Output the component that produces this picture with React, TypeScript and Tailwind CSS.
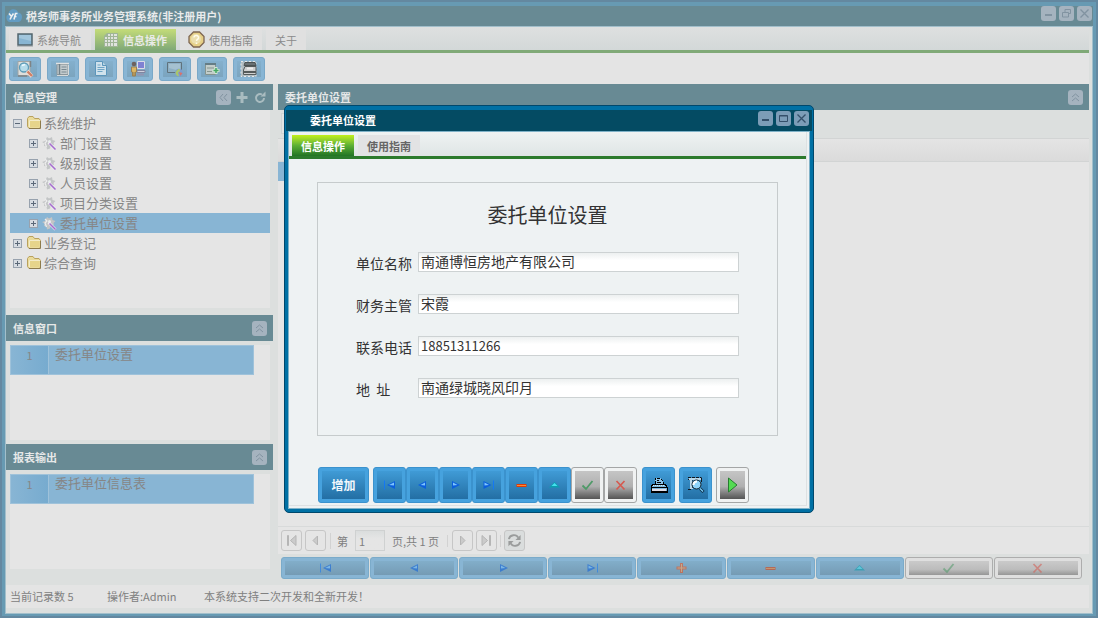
import React from "react";

type IconProps = { dim?: boolean };

/* ---------- navigation glyphs ---------- */

type GlyphName = "first" | "prev" | "next" | "last" | "add" | "delete" | "edit" | "ok" | "cancel";

const Glyph = ({ name, dim }: { name: GlyphName } & IconProps) => (
  <svg width="13" height="12" viewBox="0 0 13 12" className={dim ? "opacity-55" : ""} aria-hidden="true">
    {name === "first" && (
      <>
        <path d="M1.500 1.500v9" stroke="#1478f4" strokeWidth="1" />
        <path d="M12 2v8L4 6z" fill="#0b5fdc" />
        <path d="M11 3.500v3L6 6z" fill="#7cc4ff" />
      </>
    )}
    {name === "prev" && (
      <>
        <path d="M10 2v8L2 6z" fill="#0b5fdc" />
        <path d="M9 3.500v3L4.500 6z" fill="#7cc4ff" />
      </>
    )}
    {name === "next" && (
      <>
        <path d="M3 2v8l8-4z" fill="#0b5fdc" />
        <path d="M4 3.500v3L8.500 6z" fill="#7cc4ff" />
      </>
    )}
    {name === "last" && (
      <>
        <path d="M1.500 2v8l8-4z" fill="#0b5fdc" />
        <path d="M2.500 3.500v3L7 6z" fill="#7cc4ff" />
        <path d="M11.500 1.500v9" stroke="#1478f4" strokeWidth="1" />
      </>
    )}
    {name === "add" && (
      <>
        <path d="M6.500 1v10M1.500 6h10" stroke="#f0501a" strokeWidth="3" />
        <path d="M6.500 2v8M2.500 6h8" stroke="#ffae60" strokeWidth="1" />
      </>
    )}
    {name === "delete" && (
      <>
        <path d="M1.500 6.500h10" stroke="#e03a06" strokeWidth="3" />
        <path d="M2 6.500h9" stroke="#ff8c2e" strokeWidth="1" />
      </>
    )}
    {name === "edit" && (
      <>
        <path d="M6.500 3l5.500 5.500H1z" fill="#0a9fb0" />
        <path d="M6.500 4l3 3h-6z" fill="#46e0ee" />
      </>
    )}
    {name === "ok" && <path d="M1.500 6.500l3.500 3.500L11.500 2" fill="none" stroke="#4f9a68" strokeWidth="1.800" />}
    {name === "cancel" && <path d="M2.500 2l8 8.500M10.500 2l-8 8.500" fill="none" stroke="#d55a50" strokeWidth="1.700" />}
  </svg>
);

const glyphLabels: Record<GlyphName, string> = {
  first: "首记录",
  prev: "上一条",
  next: "下一条",
  last: "末记录",
  add: "新增",
  delete: "删除",
  edit: "编辑",
  ok: "保存",
  cancel: "取消",
};

/* ---------- toolbar icons ---------- */

const SearchPage = () => (
  <svg width="18" height="18" viewBox="0 0 18 18" aria-hidden="true">
    <path d="M2 1.500h12v14H2z" fill="#dededb" stroke="#a0a5a5" />
    <path d="M14.500 1v6M2 16h9" stroke="#7f8486" strokeWidth="1.500" />
    <circle cx="8" cy="7.500" r="4.500" fill="#b6dcea" stroke="#5d9cb8" strokeWidth="1.300" />
    <path d="M6 5.500l3-1" stroke="#eefaff" strokeWidth="1.500" />
    <path d="M11 11l5 5.500" stroke="#f0dcd2" strokeWidth="3.600" />
    <path d="M11.500 11.500l4.500 4.500" stroke="#cf7f66" strokeWidth="2.400" />
  </svg>
);
const ListIcon = () => (
  <svg width="16" height="16" viewBox="0 0 16 16" aria-hidden="true">
    <path d="M2 3.500h11v10H2z" fill="#c3cbce" stroke="#8b969b" />
    <path d="M1 2.500h13" stroke="#e0e2e2" strokeWidth="1.500" />
    <path d="M4.500 3v10.500" stroke="#6f8089" strokeWidth="1.500" />
    <path d="M6.500 6h5M6.500 8.500h5M6.500 11h5" stroke="#788991" />
    <path d="M13.500 4v10M2 14.500h11" stroke="#d7dada" />
  </svg>
);
const DocIcon = () => (
  <svg width="18" height="18" viewBox="0 0 18 18" aria-hidden="true">
    <path d="M3.500 1.500h7l4 4v10h-11z" fill="#d0e2ec" stroke="#5c96bb" />
    <path d="M10.500 1.500v4h4" fill="#b5d3e2" stroke="#5c96bb" />
    <path d="M5.500 5h3M5.500 7.500h7M5.500 9.500h7M5.500 11.500h5" stroke="#6fa5c5" />
  </svg>
);
const UserIcon = () => (
  <svg width="18" height="18" viewBox="0 0 18 18" aria-hidden="true">
    <path d="M8.500 1.500h7v7h-7z" fill="#7f82d2" stroke="#dadce6" />
    <path d="M8 10.500h8v2H8z" fill="#cfd0dc" stroke="#8085a0" />
    <path d="M8 14.500h7" stroke="#9295b2" strokeWidth="2" />
    <circle cx="5" cy="4" r="2.300" fill="#6d625f" />
    <path d="M2.500 7h5v5h-1v4h-3v-4h-1z" fill="#dcb663" stroke="#9a8153" />
    <path d="M5 12v4" stroke="#8c7651" />
  </svg>
);
const ScreenIcon = () => (
  <svg width="18" height="18" viewBox="0 0 18 18" aria-hidden="true">
    <path d="M1.500 2.500h14v10h-14z" fill="#8fb0c4" stroke="#5f727c" />
    <path d="M3 4h11v7L3 8z" fill="#a5c1d0" />
    <circle cx="13" cy="12.500" r="3.800" fill="#7b9ed0" />
    <path d="M13 8.700c2 1 1 3-1 4l1 3.500c-4-.5-5-5 0-7.500z" fill="#a9c66c" />
    <path d="M13 12l3.500 1-2 3z" fill="#d8736a" />
  </svg>
);
const AddGridIcon = () => (
  <svg width="18" height="18" viewBox="0 0 18 18" aria-hidden="true">
    <path d="M2.500 3.500h10v11h-10z" fill="#c3cdca" stroke="#84938e" />
    <path d="M2 4h11" stroke="#657d85" strokeWidth="2" />
    <path d="M4 8h7M4 11.500h5" stroke="#87968f" />
    <path d="M13 7v7M9.500 10.500h7" stroke="#cfe6d4" strokeWidth="3" />
    <path d="M13 8v5M10.500 10.500h5" stroke="#43a862" strokeWidth="1.500" />
  </svg>
);
const PrinterGrayIcon = () => (
  <svg width="20" height="18" viewBox="0 0 20 18" aria-hidden="true">
    <path d="M2 1.500h15v15H2z" fill="#b2bdc2" stroke="#e6e8e8" strokeDasharray="2 2" />
    <path d="M6 2.500h10l1 3H5z" fill="#697174" stroke="#4d5353" />
    <path d="M6 6.500h11v8H4.500V10z" fill="#cfd0d0" stroke="#555b5b" />
    <path d="M8 8.500h6" stroke="#ededed" strokeWidth="2" />
    <path d="M5 12h12" stroke="#555b5b" strokeWidth="2" />
  </svg>
);
const PrinterIcon = () => (
  <svg width="18" height="18" viewBox="0 0 18 18" shapeRendering="crispEdges" aria-hidden="true">
    <path d="M5 8V2h5l3 3v4" fill="#8cc4e8" stroke="#000" strokeDasharray="3 1" />
    <path d="M7 4h2M7 6h4" stroke="#000" />
    <path d="M3 8h12l2 3v5H1v-5z" fill="#7db9dd" stroke="#000" />
    <path d="M3 9.500h12" stroke="#d3ecfa" strokeDasharray="1 1" />
    <path d="M1 11.500h16" stroke="#000" />
    <path d="M2 13.500h14" stroke="#e4dfe8" strokeWidth="2" />
    <path d="M1 15.500h16" stroke="#000" />
  </svg>
);
const PreviewIcon = () => (
  <svg width="18" height="18" viewBox="0 0 18 18" aria-hidden="true">
    <path d="M1 1.500h13.500M1 3.500h4M1 13.500h3" stroke="#101820" strokeDasharray="3 1" />
    <path d="M2 2h12v2H6v9H3V4H2z" fill="#b9d7e9" />
    <path d="M5.500 4v8" stroke="#29506c" />
    <path d="M14.500 2v4" stroke="#101820" />
    <circle cx="9.500" cy="8.500" r="4.500" fill="#8fd4fa" stroke="#142028" />
    <path d="M6.500 9c0-2 1.500-3.500 3.500-3.500" fill="none" stroke="#fff" strokeWidth="2" />
    <path d="M13 12.500l3.500 3.500" stroke="#102f48" strokeWidth="3" />
    <path d="M13 12.500l3 3" stroke="#7cd3ff" strokeWidth="1.300" />
  </svg>
);
const MonitorIcon = () => (
  <svg width="16" height="14" viewBox="0 0 16 14" aria-hidden="true">
    <path d="M1 1h14v11H1z" fill="#88b5d2" stroke="#53656e" strokeWidth="1.500" />
    <path d="M2 2h12v6L2 5z" fill="#a2c6dc" />
    <path d="M0 13.500h16" stroke="#b9bdbf" />
  </svg>
);
const GridIcon = () => (
  <svg width="16" height="16" viewBox="0 0 16 16" aria-hidden="true">
    <path d="M4 1h11v14H1V4z" fill="#9fb596" />
    <path
      d="M5 2h2v2H5zM8 2h2v2H8zM11 2h3v2h-3zM2 5h2v2H2zM5 5h2v2H5zM8 5h2v2H8zM11 5h3v2h-3zM2 8h2v2H2zM5 8h2v2H5zM8 8h2v2H8zM11 8h3v2h-3zM2 11h2v3H2zM5 11h2v3H5zM8 11h2v3H8zM11 11h3v3h-3z"
      fill="#e0e3de"
    />
  </svg>
);
const HelpIcon = () => (
  <svg width="17" height="17" viewBox="0 0 17 17" aria-hidden="true">
    <path d="M5.500 1h6L16 5.500v6L11.500 16h-6L1 11.500v-6z" fill="#e6cf87" stroke="#7e6651" strokeWidth="1.300" />
    <circle cx="8" cy="8" r="5" fill="#ecdfae" />
    <path d="M6 6.500c0-3 5-2.500 4.500.5-.3 1.500-2 1.500-2 3M8.500 11.500v1.500" fill="none" stroke="#fffbe9" strokeWidth="1.500" />
  </svg>
);
const LogoIcon = () => (
  <svg width="16" height="14" viewBox="0 0 16 14" aria-hidden="true">
    <path d="M3.500 13C-.5 12 -.5 6 2.500 5.500 2.500-1 11-1 12 3.500c5.500 0 5 9 .5 9.500z" fill="#629cc3" />
    <path d="M3 4.500l2.500 3L7.500 4.500M5.500 7.500L4 10.500M11.500 4.500H9.500l-1.500 6M8.500 7.500h2" fill="none" stroke="#edf0f2" strokeWidth="1.600" />
  </svg>
);
const FolderIcon = () => (
  <svg width="16" height="14" viewBox="0 0 16 14" aria-hidden="true">
    <path d="M1.500 10.500v-8l1.500-2h4l1.500 2H13l1.500 2v7l-1.500 1H3z" fill="#eadb9a" stroke="#b9a15e" />
    <path d="M4 4h9.500v7H4z" fill="#e6d48a" />
    <path d="M3.500 11V4.500H14" fill="none" stroke="#f3ebc8" />
    <path d="M3 12.500h11.500V5" fill="none" stroke="#8d7b4c" />
  </svg>
);
const GearIcon = () => (
  <svg width="15" height="15" viewBox="0 0 15 15" aria-hidden="true">
    <path d="M5 1l2 1.500L10 1l.5 3 3 1-2 2 .5 2-3-.5-1 4-3 1-.5-3L2 10l.5-2.500L0 6l3-1z" fill="#c3c5c6" />
    <path d="M3 3l2 2-2 2 1.500 4" fill="none" stroke="#ececec" strokeWidth="1.200" />
    <circle cx="7.500" cy="5.500" r="1.500" fill="#e9edef" />
    <path d="M6.500 6.500l7 7" stroke="#ededf0" strokeWidth="2.600" />
    <path d="M7.500 7.500l6 6" stroke="#a66dcd" strokeWidth="1.600" />
  </svg>
);
const ToggleIcon = ({ open }: { open?: boolean }) => (
  <svg width="9" height="9" viewBox="0 0 9 9" shapeRendering="crispEdges" aria-hidden="true">
    <path d="M.5.5h8v8h-8z" fill="#d7dce2" stroke="#98a2ae" />
    <path d="M2 4.500h5" stroke="#5b6878" />
    {!open && <path d="M4.500 2v5" stroke="#5b6878" />}
  </svg>
);

/* ---------- small window tools ---------- */

type ToolKind = "min" | "restore" | "max" | "close" | "up" | "left";

const toolLabels: Record<ToolKind, string> = {
  min: "最小化",
  restore: "还原",
  max: "最大化",
  close: "关闭",
  up: "折叠",
  left: "收起",
};

const Tool = ({ kind, active }: { kind: ToolKind; active?: boolean }) => (
  <button
    type="button"
    aria-label={toolLabels[kind]}
    className={
      active
        ? "flex h-[15px] w-[15px] items-center justify-center rounded-[3px] bg-[#7c9db7] text-[#34506a]"
        : "flex h-[15px] w-[15px] items-center justify-center rounded-[3px] bg-[#a5b3bf] text-[#8193a1]"
    }
  >
    <svg width="9" height="9" viewBox="0 0 9 9" fill="none" stroke="currentColor" aria-hidden="true">
      {kind === "min" && <path d="M1 6h7" strokeWidth="2" />}
      {kind === "restore" && <path d="M3 3V.5h5.500v4H6.500M.5 3.500h6v4.500h-6z" />}
      {kind === "max" && <path d="M.5 7.500v-6h8v6zM.5 2h8" />}
      {kind === "close" && <path d="M.5.5l8 8M8.500.5l-8 8" strokeWidth="1.300" />}
      {kind === "up" && <path d="M1 4l3.500-3L8 4M1 8l3.500-3L8 8" />}
      {kind === "left" && <path d="M4 1L1 4.500 4 8M8 1L5 4.500 8 8" />}
    </svg>
  </button>
);

const PanelHeader = ({ title, children }: { title: string; children?: React.ReactNode }) => (
  <header className="flex h-[26px] shrink-0 items-center justify-between bg-[#688a94] pr-[6px] pl-[7px]">
    <h2 className="text-[11px] leading-4 font-bold text-[#e6e8e8]">{title}</h2>
    <div className="flex items-center gap-1">{children ?? <Tool kind="up" />}</div>
  </header>
);

const TreeRow = ({ label, level, open, selected }: { label: string; level: 0 | 1; open?: boolean; selected?: boolean }) => (
  <li className={`flex h-5 items-center ${level === 0 ? "pl-[3px]" : "pl-[19px]"} ${selected ? "bg-[#88b5d4]" : ""}`}>
    <button type="button" aria-label={open ? "折叠" : "展开"} className="w-[13px] shrink-0">
      <ToggleIcon open={open} />
    </button>
    <span className="w-[18px] shrink-0">{level === 0 ? <FolderIcon /> : <GearIcon />}</span>
    <span className="text-[13px] leading-4 text-[#868686]">{label}</span>
  </li>
);

const ListPanel = ({ title, item }: { title: string; item: string }) => (
  <section className="shrink-0">
    <PanelHeader title={title} />
    <div className="pt-1 pr-[3px] pb-1 pl-1">
      <ol className="h-[95px] bg-[#e5e5e5] pr-4">
        <li className="flex h-[30px] border border-[#9fc2da] bg-[#88b5d4] text-[#868686]">
          <span className="w-[38px] border-r border-[#9fc2da] bg-linear-to-r from-[#88b5d4] to-[#77abcf] pt-px text-center text-[11px] leading-4">
            1
          </span>
          <span className="pl-[6px] text-[13px] leading-4">{item}</span>
        </li>
      </ol>
    </div>
  </section>
);

const ToolbarButton = ({ label, narrow, children }: { label: string; narrow?: boolean; children: React.ReactNode }) => (
  <button
    type="button"
    aria-label={label}
    className={`${narrow ? "w-[30px]" : "w-8"} flex h-6 items-center justify-center rounded-[3px] border border-[#79a8c8] bg-[#88b5d4] p-[3px]`}
  >
    <span className="flex h-full w-full items-center justify-center bg-linear-to-b from-[#84b0cd] to-[#7ba4be]">{children}</span>
  </button>
);

const PagerButton = ({ label, d }: { label: string; d: string }) => (
  <button
    type="button"
    aria-label={label}
    className="flex h-[21px] w-[21px] items-center justify-center rounded-[3px] border border-[#c6c6c6] bg-[#e5e5e5]"
  >
    <svg width="13" height="13" viewBox="0 0 13 13" fill="#cbcbcb" stroke="#b5b5b5" aria-hidden="true">
      <path d={d} />
    </svg>
  </button>
);

const WideButton = ({ name }: { name: GlyphName }) => {
  const gray = name === "ok" || name === "cancel";
  return (
    <button
      type="button"
      aria-label={glyphLabels[name]}
      className={`h-[22px] min-w-0 flex-1 rounded-[3px] border p-[3px] ${gray ? "border-[#adadad] bg-[#dfdfdf]" : "border-[#7babca] bg-[#88b5d4]"}`}
    >
      <span
        className={`flex h-full items-center justify-center ${gray ? "bg-linear-to-b from-[#cacaca] from-0% via-[#bcbcbc] via-60% to-[#969696]" : "bg-linear-to-b from-[#82aeca] to-[#759bb4]"}`}
      >
        <Glyph name={name} dim />
      </span>
    </button>
  );
};

const DialogButton = ({ label, tone, wide, children }: { label: string; tone: "blue" | "gray"; wide?: boolean; children: React.ReactNode }) => (
  <button
    type="button"
    aria-label={label}
    className={`h-9 ${wide ? "w-[51px]" : "w-[33px]"} rounded-[3px] border p-[3px] ${tone === "gray" ? "border-[#a4a6a6] bg-[#f0f2f2]" : "border-[#3b92cd] bg-[#46a2de]"}`}
  >
    <span
      className={`flex h-full items-center justify-center ${tone === "gray" ? "bg-linear-to-b from-[#c5c5c5] from-0% via-[#b0b0b0] via-55% to-[#555555]" : "bg-linear-to-b from-[#409bd6] to-[#236fa4]"}`}
    >
      {children}
    </span>
  </button>
);

const Field = ({ id, label, value, small }: { id: string; label: string; value: string; small?: boolean }) => (
  <div className="flex h-5 items-center">
    <label htmlFor={id} className="w-[62px] shrink-0 pt-[2px] text-[14px] leading-5 whitespace-pre">
      {label}
    </label>
    <input
      id={id}
      defaultValue={value}
      className={`h-5 w-full min-w-0 border border-[#cdd2d3] bg-linear-to-b from-[#edf0f0] from-0% to-white to-40% px-[2px] pb-[2px] leading-4 outline-none ${small ? "text-[13px]" : "text-[14px]"}`}
    />
  </div>
);

const navGlyphs: GlyphName[] = ["first", "prev", "next", "last", "delete", "edit", "ok", "cancel"];
const wideGlyphs: GlyphName[] = ["first", "prev", "next", "last", "add", "delete", "edit", "ok", "cancel"];

const Dialog = () => (
  <div
    role="dialog"
    aria-labelledby="dialog-title"
    className="flex h-[408px] w-[530px] flex-col rounded-[5px] border border-[#00486c] bg-[#0070a4] px-[3px] pt-1 pb-[3px]"
  >
    <header className="-mx-[2px] flex h-[21px] shrink-0 items-center justify-between bg-[#044b63] pr-[3px] pl-6">
      <h2 id="dialog-title" className="pb-[2px] text-[11px] leading-4 font-bold text-white">
        委托单位设置
      </h2>
      <div className="flex gap-[3px] pb-1">
        <Tool kind="min" active />
        <Tool kind="max" active />
        <Tool kind="close" active />
      </div>
    </header>
    <div className="min-h-0 flex-1 border border-[#7fb2c8] bg-[#eef2f3] pr-[2px] pb-[2px]">
      <div className="flex h-full flex-col border-r border-b border-[#dde1e2]">
        <nav className="flex h-[27px] shrink-0 items-end gap-1 border-b-[3px] border-[#2c7a2c] bg-linear-to-b from-[#eff3f3] to-[#dfe5e5] pl-[3px]">
          <button type="button" className="h-[21px] w-[62px] bg-linear-to-b from-[#c2f018] via-[#5cb034] to-[#217424] text-[11px] leading-5 font-bold text-white">
            信息操作
          </button>
          <button type="button" className="h-[21px] w-[62px] bg-[#e2e3e4] text-[11px] leading-5 font-bold text-[#666]">
            使用指南
          </button>
        </nav>
        <div className="flex min-h-0 flex-1 flex-col justify-between px-7 pt-[23px] pb-[2px]">
          <form className="h-[254px] border border-[#c6cbcc] px-[38px] text-[#333]" onSubmit={(e) => e.preventDefault()}>
            <h3 className="mt-[18px] mb-[23px] text-center text-[20px] leading-7">委托单位设置</h3>
            <div className="flex flex-col gap-[22px]">
              <Field id="unit" label="单位名称" value="南通博恒房地产有限公司" />
              <Field id="chief" label="财务主管" value="宋霞" />
              <Field id="phone" label="联系电话" value="18851311266" small />
              <Field id="address" label={"地  址"} value="南通绿城晓风印月" />
            </div>
          </form>
          <div className="flex gap-1 pl-px">
            <DialogButton label="增加" tone="blue" wide>
              <span className="text-[12px] leading-4 font-bold text-[#f2f8fc]">增加</span>
            </DialogButton>
            <div className="flex">
              {navGlyphs.map((name) => (
                <DialogButton key={name} label={glyphLabels[name]} tone={name === "ok" || name === "cancel" ? "gray" : "blue"}>
                  <Glyph name={name} />
                </DialogButton>
              ))}
            </div>
            <div className="flex gap-1 pl-px">
              <DialogButton label="打印" tone="blue">
                <PrinterIcon />
              </DialogButton>
              <DialogButton label="预览" tone="blue">
                <PreviewIcon />
              </DialogButton>
              <DialogButton label="运行" tone="gray">
                <svg width="12" height="16" viewBox="0 0 12 16" aria-hidden="true">
                  <path d="M1.500 1v14l8.500-7z" fill="#54da52" stroke="#267d30" />
                </svg>
              </DialogButton>
            </div>
          </div>
        </div>
      </div>
    </div>
  </div>
);

export default function App() {
  return (
    <div className="relative flex h-screen flex-col overflow-hidden border-2 border-[#6488a0] bg-[#679ab3] px-[3px] pt-1 pb-[2px] font-['Noto_Sans_CJK_SC',sans-serif]">
      <header className="flex h-5 shrink-0 items-center justify-between bg-[#688a94] px-px">
        <div className="flex items-center gap-1">
          <LogoIcon />
          <h1 className="pb-px text-[11px] leading-4 font-bold text-[#e8eaeb]">税务师事务所业务管理系统(非注册用户)</h1>
        </div>
        <div className="flex gap-[3px] pb-[5px]">
          <Tool kind="min" />
          <Tool kind="restore" />
          <Tool kind="close" />
        </div>
      </header>

      <div className="flex min-h-0 flex-1 flex-col border border-[#a2bfcb] bg-[#dcdfde] pr-[3px]">
        <nav className="flex h-[26px] shrink-0 items-end gap-1 border-b-[3px] border-[#80a977] bg-linear-to-b from-[#dee0e0] to-[#d3d8d8] pl-[3px] text-[11px] leading-5 text-[#8b8b8b]">
          <button type="button" className="flex h-[21px] w-[82px] items-center gap-1 bg-[#e0e0e0] pl-2">
            <MonitorIcon />
            <span>系统导航</span>
          </button>
          <button type="button" className="flex h-[21px] w-[81px] items-center gap-1 bg-linear-to-b from-[#c4dc78] to-[#80a977] pl-2 font-bold text-[#e8eae6]">
            <GridIcon />
            <span>信息操作</span>
          </button>
          <button type="button" className="flex h-[21px] w-[82px] items-center gap-1 bg-[#e0e0e0] pl-2">
            <HelpIcon />
            <span>使用指南</span>
          </button>
          <button type="button" className="h-[21px] w-10 bg-[#e0e0e0] text-center">
            关于
          </button>
        </nav>

        <div className="flex h-[31px] shrink-0 items-center gap-[6px] bg-[#e4e4e4] pl-[3px]">
          <ToolbarButton label="查询"><SearchPage /></ToolbarButton>
          <ToolbarButton label="列表"><ListIcon /></ToolbarButton>
          <ToolbarButton label="文档"><DocIcon /></ToolbarButton>
          <ToolbarButton label="用户" narrow><UserIcon /></ToolbarButton>
          <ToolbarButton label="屏幕"><ScreenIcon /></ToolbarButton>
          <ToolbarButton label="添加" narrow><AddGridIcon /></ToolbarButton>
          <ToolbarButton label="打印"><PrinterGrayIcon /></ToolbarButton>
        </div>

        <div className="flex min-h-0 flex-1 gap-[5px]">
          <aside className="flex w-[267px] shrink-0 flex-col pb-3">
            <PanelHeader title="信息管理">
              <Tool kind="left" />
              <button type="button" aria-label="添加">
                <svg width="14" height="14" viewBox="0 0 14 14" aria-hidden="true">
                  <path d="M7 2v11M1.500 7.500h11" stroke="#a9bcc0" strokeWidth="3" />
                </svg>
              </button>
              <button type="button" aria-label="刷新">
                <svg width="14" height="14" viewBox="0 0 14 14" aria-hidden="true">
                  <path d="M9 4.500A4 4 0 1 0 11 8" fill="none" stroke="#a9bcc0" strokeWidth="2" />
                  <path d="M7.500 6.500h5v-5z" fill="#a9bcc0" />
                </svg>
              </button>
            </PanelHeader>
            <div className="flex min-h-0 flex-1 flex-col pr-[3px] pb-[7px] pl-1">
              <ul className="min-h-0 flex-1 bg-[#e5e5e5] pt-[3px]">
                <TreeRow level={0} open label="系统维护" />
                <TreeRow level={1} label="部门设置" />
                <TreeRow level={1} label="级别设置" />
                <TreeRow level={1} label="人员设置" />
                <TreeRow level={1} label="项目分类设置" />
                <TreeRow level={1} label="委托单位设置" selected />
                <TreeRow level={0} label="业务登记" />
                <TreeRow level={0} label="综合查询" />
              </ul>
            </div>
            <ListPanel title="信息窗口" item="委托单位设置" />
            <ListPanel title="报表输出" item="委托单位信息表" />
          </aside>

          <main className="flex min-w-0 flex-1 flex-col">
            <PanelHeader title="委托单位设置" />
            <div className="h-7 shrink-0 p-[3px]">
              <div className="h-[21px] w-16 border border-[#d0d3d3] bg-[#e2e4e4]" />
            </div>
            <div className="h-6 shrink-0 border-y border-[#d2d4d4] bg-linear-to-b from-[#e4e4e4] to-[#dbdbdb]" />
            <div className="min-h-0 flex-1 bg-[#e5e5e5]">
              <div className="h-[19px] w-16 bg-[#88b5d4]" />
            </div>
            <div className="flex h-7 shrink-0 items-center gap-[3px] border-t border-[#d8dada] bg-[#e5e5e5] pl-[3px] text-[11px] leading-4 text-[#808080]">
              <PagerButton label="首页" d="M2.500 1.500h1v10h-1zM11 1.500v10L5.500 6.500z" />
              <PagerButton label="上一页" d="M8.500 2v9L4 6.500z" />
              <label htmlFor="page" className="ml-px border-l border-[#d2d2d2] pl-[6px]">第</label>
              <input id="page" defaultValue="1" className="ml-1 h-[21px] w-[30px] border border-[#cfd1d1] bg-linear-to-b from-[#dadddd] to-[#e5e5e5] to-40% px-[3px] outline-none" />
              <span className="mx-1 pr-px">页,共 1 页</span>
              <span className="mr-px h-3 border-l border-[#d2d2d2]" />
              <PagerButton label="下一页" d="M4.500 2v9L9 6.500z" />
              <PagerButton label="末页" d="M2 1.500v10L7.500 6.500zM9.500 1.500h1v10h-1z" />
              <span className="h-3 border-l border-[#d2d2d2]" />
              <button type="button" aria-label="刷新" className="flex h-[21px] w-[21px] items-center justify-center rounded-[3px] border border-[#c6c6c6] bg-[#dadddd]">
                <svg width="15" height="15" viewBox="0 0 16 16" fill="none" stroke="#9a9c9c" strokeWidth="2" aria-hidden="true">
                  <path d="M2 6.500C3 1.500 10 1 12 5M14 9.500c-1 5-8 5.500-10 1.500" />
                  <path d="M14.500 2v5.500H9zM1.500 14V8.500H7z" fill="#9a9c9c" stroke="none" />
                </svg>
              </button>
            </div>
            <div className="flex h-[31px] shrink-0 gap-px pt-[3px] pr-[7px] pl-[3px]">
              {wideGlyphs.map((name) => (
                <WideButton key={name} name={name} />
              ))}
            </div>
          </main>
        </div>

        <footer className="mb-[5px] flex h-[23px] shrink-0 items-center bg-[#e4e4e4] pb-[2px] pl-1 text-[11px] leading-4 text-[#808080]">
          <span className="w-[97px]">当前记录数 5</span>
          <span className="w-[97px]">操作者:Admin</span>
          <span>本系统支持二次开发和全新开发！</span>
        </footer>
      </div>

      <div className="absolute inset-0 flex items-center justify-center">
        <Dialog />
      </div>
    </div>
  );
}
